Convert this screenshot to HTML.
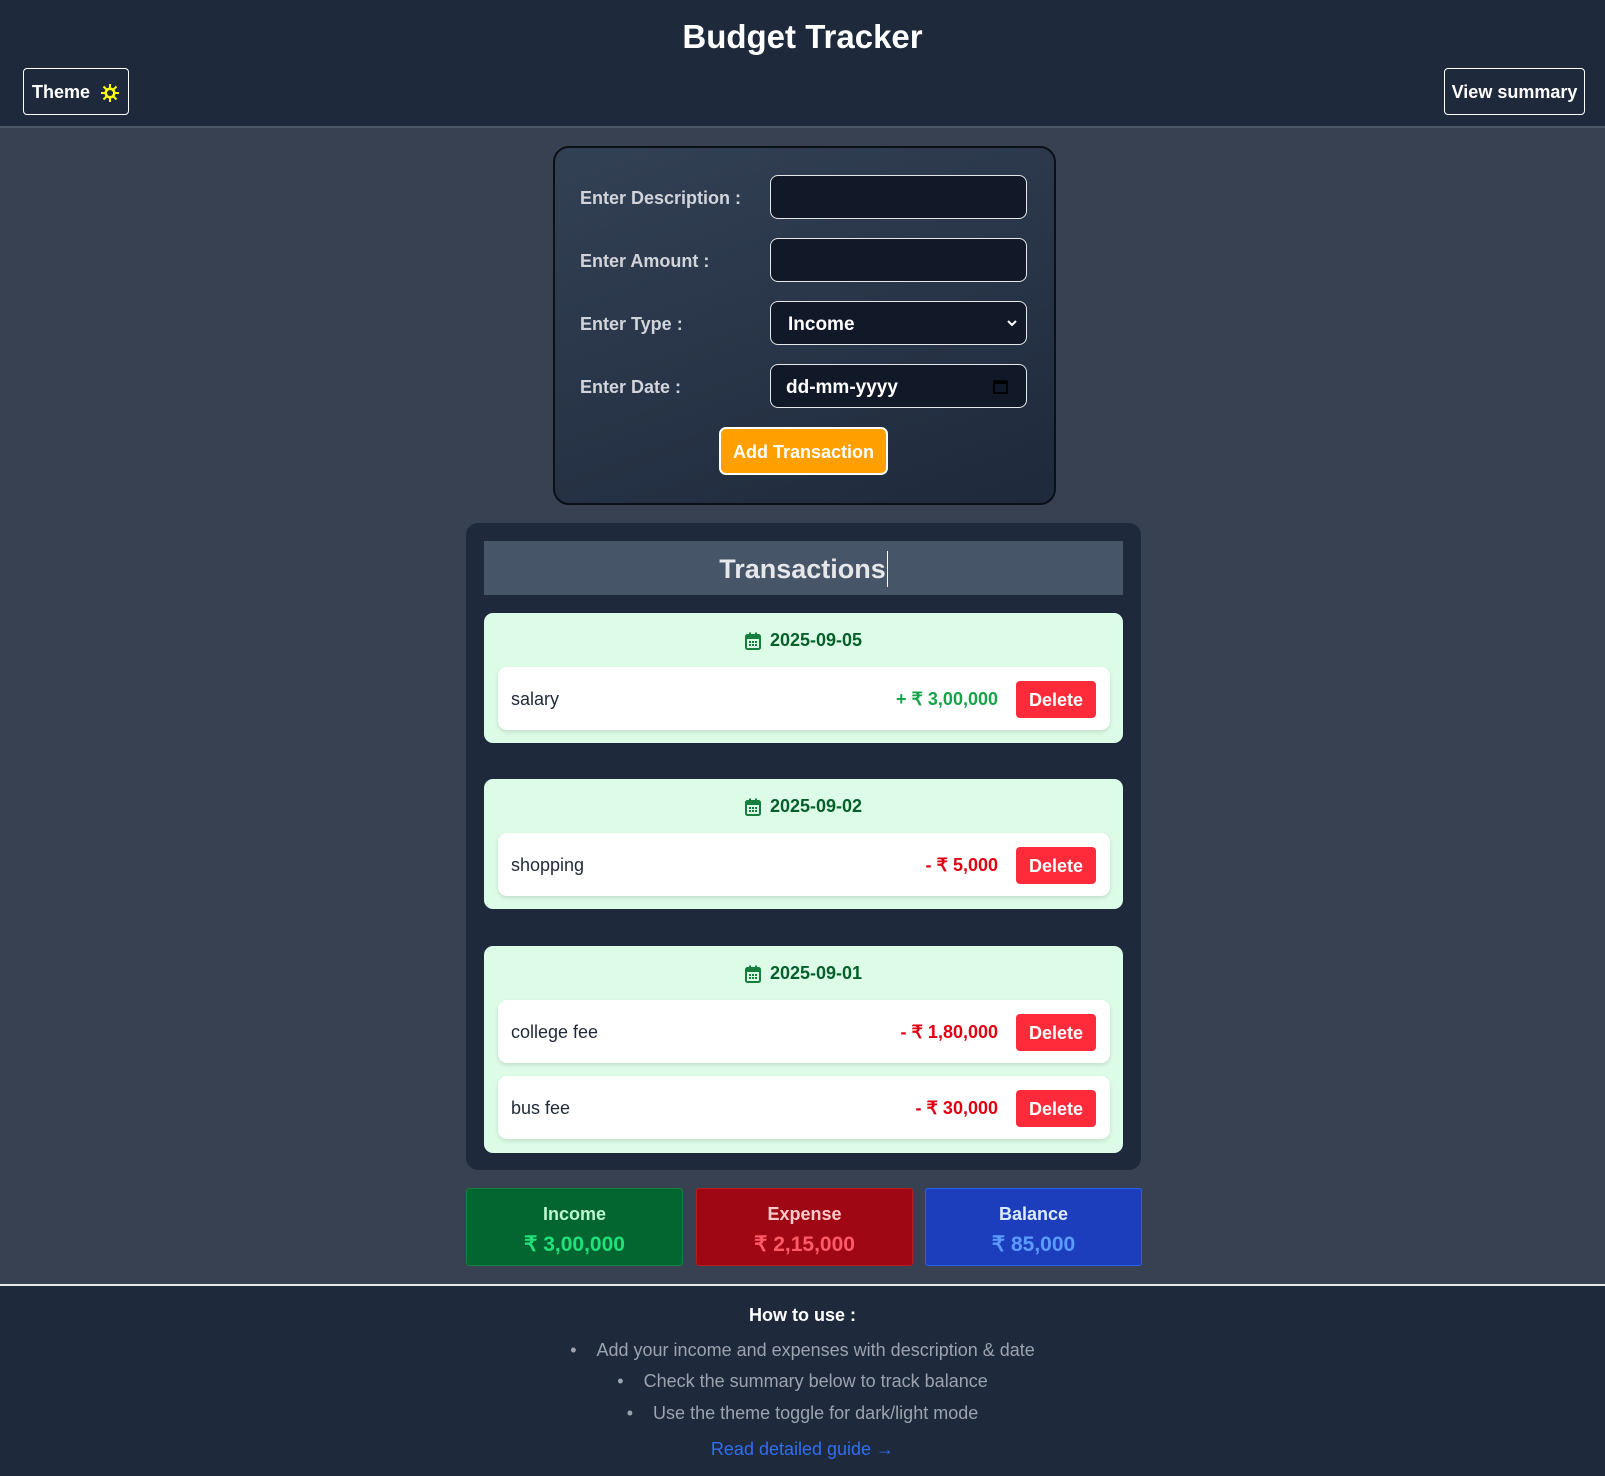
<!DOCTYPE html>
<html><head><meta charset="utf-8">
<style>
*{box-sizing:border-box;margin:0;padding:0}
html,body{width:1605px;height:1476px;overflow:hidden}
body{background:#374151;font-family:"Liberation Sans",sans-serif;position:relative;color:#fff}
.abs{position:absolute}
header{position:absolute;left:0;top:0;width:1605px;height:128px;background:#1e293b;border-bottom:2px solid #4b5563}
h1{position:absolute;left:0;width:1605px;top:18px;text-align:center;font-size:33px;font-weight:bold;color:#fff}
.hbtn{position:absolute;border:1.5px solid #fff;border-radius:4px;background:#1e293b;color:#fff;font-weight:bold;font-size:18px;display:flex;align-items:center;justify-content:center;padding-top:2px}
.form{left:553px;top:146px;width:503px;height:359px;border:2px solid #0b0f17;border-radius:16px;background:linear-gradient(160deg,#334155,#1e293b)}
.lbl{position:absolute;left:580px;font-size:18px;font-weight:bold;color:#d1d5db}
.inp{position:absolute;left:770px;width:257px;height:44px;background:#111827;border:1.5px solid #e5e7eb;border-radius:8px;color:#fff;font-size:19px;font-weight:bold;display:flex;align-items:center;padding-top:3px}
.add{left:719px;top:427px;width:169px;height:48px;background:#ff9f00;border:2px solid #fff;border-radius:7px;color:#fff;font-weight:bold;font-size:18px;display:flex;align-items:center;justify-content:center;padding-top:2px}
.tx{left:466px;top:523px;width:675px;height:647px;background:#1e293b;border-radius:12px}
.th{left:484px;top:541px;width:639px;height:54px;background:#475569;font-size:27px;font-weight:bold;color:#e5e7eb;display:flex;align-items:center;justify-content:center;padding-top:2px}
.grp{position:absolute;left:484px;width:639px;background:#dcfce7;border-radius:9px}
.date{position:absolute;left:0;width:100%;text-align:center;font-weight:bold;font-size:18px;color:#065f2b;display:flex;justify-content:center;align-items:center;gap:9px}
.row{position:absolute;left:14px;width:612px;height:63px;background:#fff;border-radius:9px;box-shadow:0 2px 4px rgba(0,0,0,.12);display:flex;align-items:center;padding-left:13px;padding-top:2px;font-size:18px;color:#1f2937}
.amt{position:absolute;right:112px;font-weight:bold;font-size:18px}
.del{position:absolute;right:14px;width:80px;height:37px;background:#ff2a3a;border-radius:4px;color:#fff;font-weight:bold;font-size:18px;display:flex;align-items:center;justify-content:center;padding-top:2px}
.g{color:#16a34a}.r{color:#e00012}
.sum{position:absolute;top:1188px;width:217px;height:78px;border-radius:3px;text-align:center;font-weight:bold}
.sum .t{margin-top:15px;font-size:18px}
.sum .v{margin-top:7px;font-size:21px}
footer{position:absolute;left:0;top:1284px;width:1605px;height:192px;background:#1e293b;border-top:2px solid #e5e7eb;text-align:center}
.fl{position:absolute;left:0;width:1605px;text-align:center;font-size:18px;color:#9ca3af}
</style></head><body>
<header>
<h1>Budget Tracker</h1>
<div class="hbtn" style="left:23px;top:68px;width:106px;height:47px">Theme&nbsp;&nbsp;<svg width="20" height="20" viewBox="0 0 20 20"><g stroke="#ff0" stroke-width="2"><line x1="10" y1="1" x2="10" y2="19"/><line x1="1" y1="10" x2="19" y2="10"/><line x1="3.5" y1="3.5" x2="16.5" y2="16.5"/><line x1="16.5" y1="3.5" x2="3.5" y2="16.5"/></g><circle cx="10" cy="10" r="5.5" fill="#ff0"/><circle cx="10" cy="10" r="3" fill="#1e293b"/></svg></div>
<div class="hbtn" style="left:1444px;top:68px;width:141px;height:47px">View summary</div>
</header>

<div class="abs form"></div>
<div class="lbl" style="top:188px">Enter Description :</div>
<div class="inp" style="top:175px"></div>
<div class="lbl" style="top:251px">Enter Amount :</div>
<div class="inp" style="top:238px"></div>
<div class="lbl" style="top:314px">Enter Type :</div>
<div class="inp" style="top:301px;padding-left:17px">Income<svg class="abs" style="right:8px;top:17px" width="12" height="8" viewBox="0 0 12 8"><path d="M2 2l4 4 4-4" stroke="#fff" stroke-width="2" fill="none"/></svg></div>
<div class="lbl" style="top:377px">Enter Date :</div>
<div class="inp" style="top:364px;padding-left:15px">dd-mm-yyyy<svg class="abs" style="right:18px;top:14px" width="15" height="15" viewBox="0 0 15 15"><rect x="1" y="2" width="13" height="12" fill="none" stroke="#000" stroke-width="1.6"/><rect x="1" y="2" width="13" height="3" fill="#000"/></svg></div>
<div class="abs add">Add Transaction</div>

<div class="abs tx"></div>
<div class="abs th">Transactions<span style="display:inline-block;width:1px;height:36px;background:#fff;margin-left:1px"></span></div>

<svg width="0" height="0" style="position:absolute"><defs><symbol id="cal" viewBox="0 0 16 18"><rect x="1" y="3" width="14" height="14" rx="1.5" fill="none" stroke="#15803d" stroke-width="2"/><rect x="1" y="3" width="14" height="4" fill="#15803d"/><rect x="4" y="0.5" width="2" height="4" fill="#15803d"/><rect x="10" y="0.5" width="2" height="4" fill="#15803d"/><g fill="#15803d"><rect x="4" y="9" width="2" height="2"/><rect x="7" y="9" width="2" height="2"/><rect x="10" y="9" width="2" height="2"/><rect x="4" y="12" width="2" height="2"/><rect x="7" y="12" width="2" height="2"/><rect x="10" y="12" width="2" height="2"/></g></symbol></defs></svg>

<div class="grp" style="top:613px;height:130px">
<div class="date" style="top:17px"><svg width="16" height="18"><use href="#cal"/></svg>2025-09-05</div>
<div class="row" style="top:54px">salary<span class="amt g">+ ₹ 3,00,000</span><span class="del">Delete</span></div>
</div>
<div class="grp" style="top:779px;height:130px">
<div class="date" style="top:17px"><svg width="16" height="18"><use href="#cal"/></svg>2025-09-02</div>
<div class="row" style="top:54px">shopping<span class="amt r">- ₹ 5,000</span><span class="del">Delete</span></div>
</div>
<div class="grp" style="top:946px;height:207px">
<div class="date" style="top:17px"><svg width="16" height="18"><use href="#cal"/></svg>2025-09-01</div>
<div class="row" style="top:54px">college fee<span class="amt r">- ₹ 1,80,000</span><span class="del">Delete</span></div>
<div class="row" style="top:130px">bus fee<span class="amt r">- ₹ 30,000</span><span class="del">Delete</span></div>
</div>

<div class="sum" style="left:466px;background:#036630;border:1px solid #15803d"><div class="t" style="color:#bbf7d0">Income</div><div class="v" style="color:#22e07a">₹ 3,00,000</div></div>
<div class="sum" style="left:696px;background:#9f0714;border:1px solid #b91c1c"><div class="t" style="color:#fecaca">Expense</div><div class="v" style="color:#ff5a68">₹ 2,15,000</div></div>
<div class="sum" style="left:925px;background:#1c3ebd;border:1px solid #2563eb"><div class="t" style="color:#dbeafe">Balance</div><div class="v" style="color:#5b9bff">₹ 85,000</div></div>

<footer></footer>
<div class="fl" style="top:1305px;color:#fff;font-weight:bold">How to use :</div>
<div class="fl" style="top:1340px">•&nbsp;&nbsp;&nbsp;&nbsp;Add your income and expenses with description &amp; date</div>
<div class="fl" style="top:1371px">•&nbsp;&nbsp;&nbsp;&nbsp;Check the summary below to track balance</div>
<div class="fl" style="top:1403px">•&nbsp;&nbsp;&nbsp;&nbsp;Use the theme toggle for dark/light mode</div>
<div class="fl" style="top:1439px;color:#2f6ff0">Read detailed guide →</div>
</body></html>
